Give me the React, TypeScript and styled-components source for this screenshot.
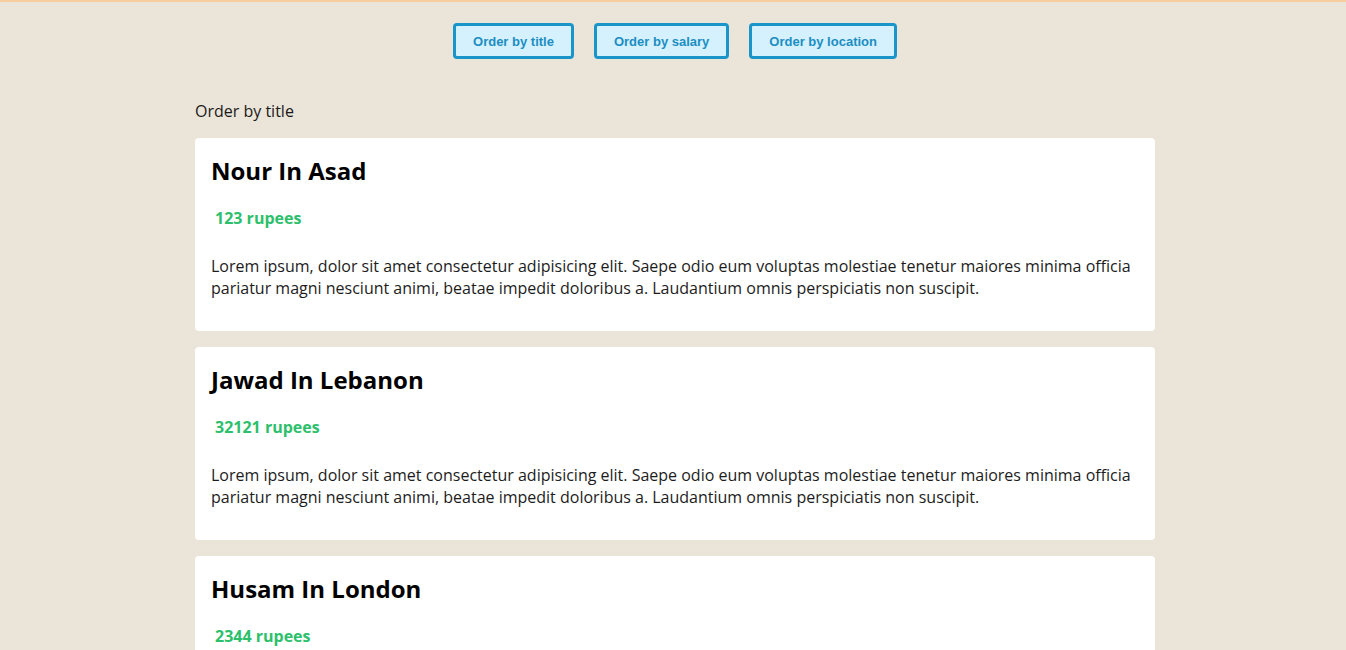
import React from "react";
import styled, { createGlobalStyle } from "styled-components";

const Global = createGlobalStyle`
  html, body { margin: 0; padding: 0; }
  body {
    background: #ebe4d8;
    border-top: 2px solid #f7cd9e;
    font-family: "Open Sans", "Noto Sans", sans-serif;
    color: #111;
  }
`;

const Page = styled.div`
  padding: 21px 0 0 4px;
`;

const Toolbar = styled.div`
  display: flex;
  justify-content: center;
  gap: 20px;
`;

const SortButton = styled.button`
  height: 36px;
  padding: 0 17px;
  background: #d5f1fe;
  border: 3px solid #1a95c9;
  border-radius: 4px;
  color: #1b8ec2;
  font-family: "Liberation Sans", Arial, sans-serif;
  font-weight: bold;
  font-size: 13px;
  cursor: pointer;
`;

const Main = styled.main`
  width: 960px;
  margin: 41px auto 0;
  display: flex;
  flex-direction: column;
  gap: 16px;
`;

const Label = styled.div`
  font-size: 16px;
  line-height: 22px;
  color: #1a1a1a;
`;

const List = styled.ul`
  list-style: none;
  margin: 0;
  padding: 0;
  display: flex;
  flex-direction: column;
  gap: 16px;
`;

const Card = styled.li`
  background: #fff;
  border-radius: 4px;
  padding: 17px 16px 32px;
`;

const Title = styled.h2`
  margin: 0;
  font-size: 24px;
  line-height: 32px;
  font-weight: 700;
  color: #000;
`;

const Salary = styled.p`
  margin: 20px 0 0;
  padding-left: 4px;
  font-size: 16px;
  line-height: 22px;
  font-weight: 700;
  color: #2dbf6b;
`;

const Text = styled.p`
  margin: 26px 0 0;
  font-size: 16px;
  line-height: 22px;
  color: #1c1c1c;
`;

const lorem =
  "Lorem ipsum, dolor sit amet consectetur adipisicing elit. Saepe odio eum voluptas molestiae tenetur maiores minima officia pariatur magni nesciunt animi, beatae impedit doloribus a. Laudantium omnis perspiciatis non suscipit.";

const jobs = [
  { title: "Nour In Asad", salary: 123 },
  { title: "Jawad In Lebanon", salary: 32121 },
  { title: "Husam In London", salary: 2344 },
];

export default function App() {
  return (
    <Page>
      <Global />
      <Toolbar>
        <SortButton>Order by title</SortButton>
        <SortButton>Order by salary</SortButton>
        <SortButton>Order by location</SortButton>
      </Toolbar>
      <Main>
        <Label>Order by title</Label>
        <List>
          {jobs.map((j) => (
            <Card key={j.title}>
              <Title>{j.title}</Title>
              <Salary>{j.salary} rupees</Salary>
              <Text>{lorem}</Text>
            </Card>
          ))}
        </List>
      </Main>
    </Page>
  );
}
